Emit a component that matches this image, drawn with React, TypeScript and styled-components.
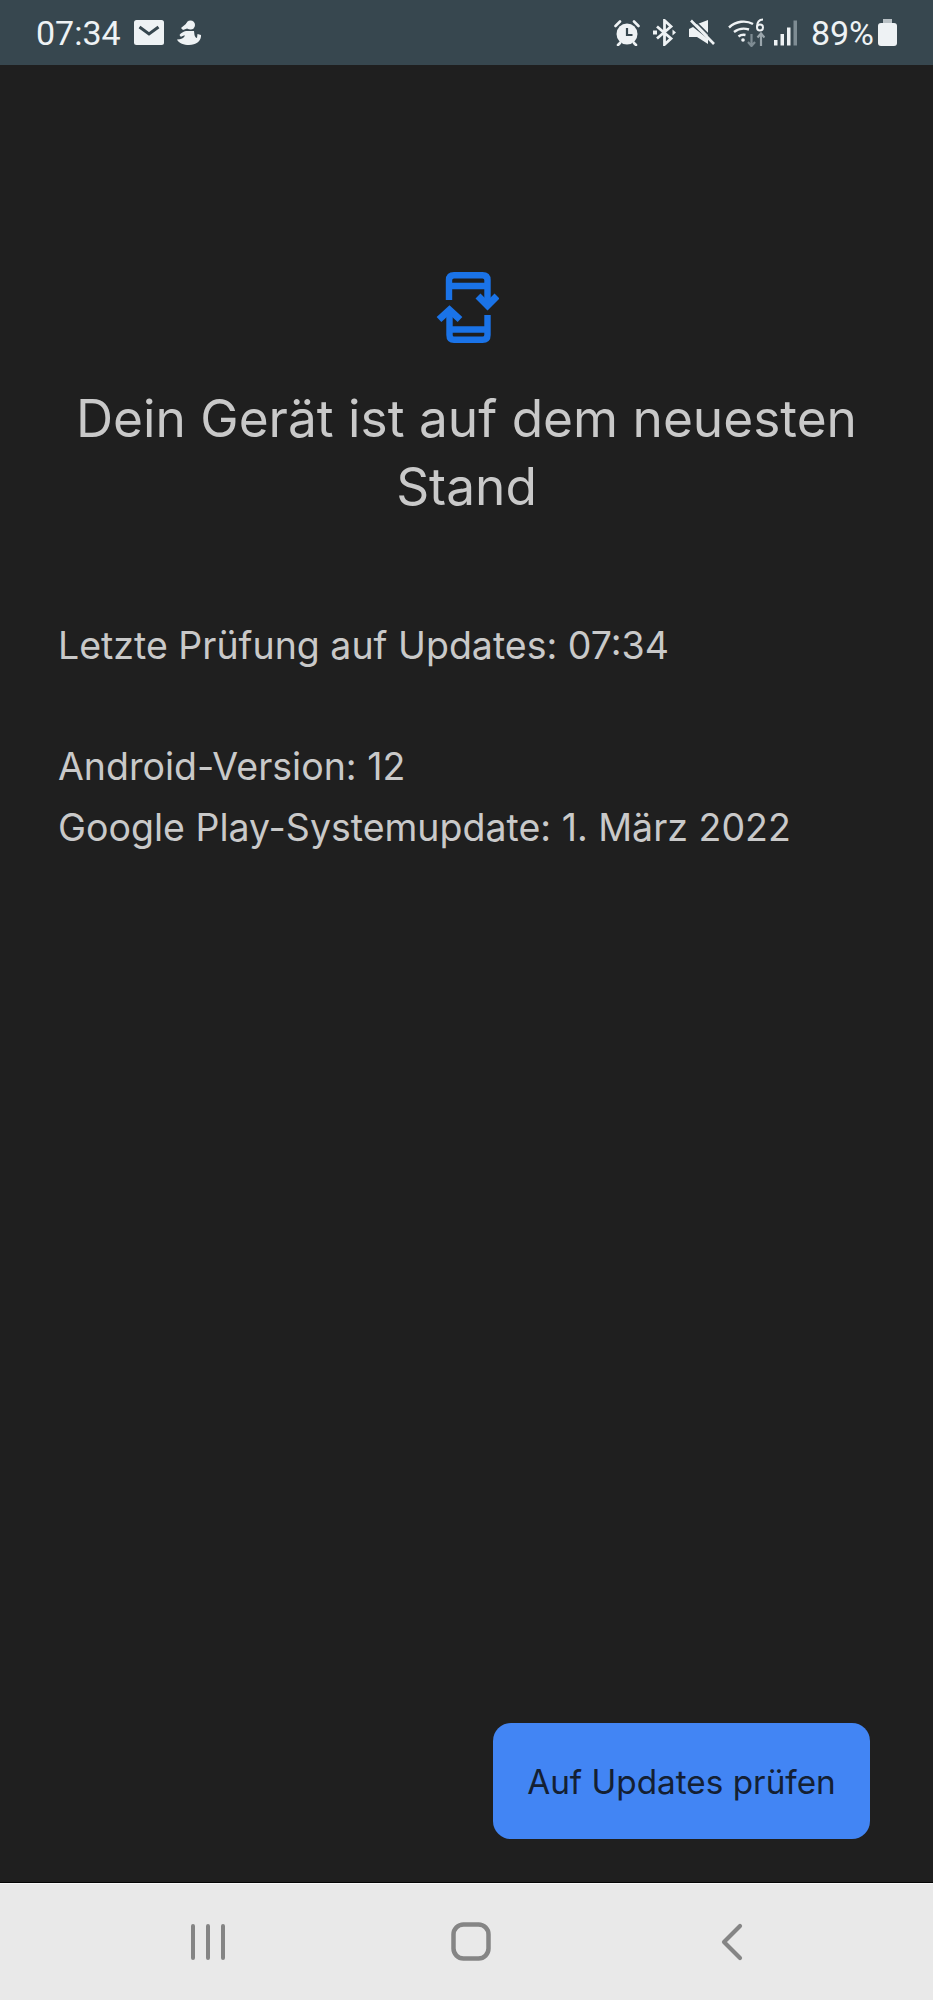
import styled, { createGlobalStyle } from "styled-components";

const GlobalStyle = createGlobalStyle`
  html, body {
    margin: 0;
    padding: 0;
    background: #1f1f1f;
  }
`;

function MailIcon() {
  return (
    <svg width="30" height="25" viewBox="0 0 30 25">
      <rect width="30" height="25" rx="2.5" fill="#eef2f4" />
      <path d="M5.500 7 L15 14 L24.500 7" fill="none" stroke="#37474f" strokeWidth="3" />
    </svg>
  );
}

function SamsungPersonIcon() {
  return (
    <svg width="24" height="25" viewBox="0 0 24 25" fill="#eef2f4">
      <circle cx="13.500" cy="5" r="4.500" />
      <path d="M10 3 L4 8 L6 10 L11.500 8 Z" />
      <path d="M9 11 H17 L17.500 15 C18 17 19 18 20 18 L20.500 14 L24 15 C24.500 20 20 25 12 25 C7 25 2 23.500 0 19.500 C4 19.500 7 18 8 15.500 C6.500 15.500 5 16 4 17 L2.500 15 C4 13 6.500 11.500 9 11 Z" />
    </svg>
  );
}

function AlarmIcon() {
  return (
    <svg width="26" height="26" viewBox="0 0 26 26">
      <circle cx="13" cy="14" r="10.500" fill="#eef2f4" />
      <path d="M13 8 V15 H18.500" fill="none" stroke="#37474f" strokeWidth="2.200" />
      <path d="M1.500 6 L6 1.500 M24.500 6 L20 1.500 M6 23 L4 25 M20 23 L22 25" stroke="#eef2f4" strokeWidth="2.600" strokeLinecap="round" />
    </svg>
  );
}

function BluetoothIcon() {
  return (
    <svg width="23" height="27" viewBox="0 0 23 27">
      <path d="M4 7.500 L18 19.500 L11.500 25.500 V1.500 L18 7.500 L4 19.500" fill="none" stroke="#eef2f4" strokeWidth="2.800" />
      <rect x="0" y="11.500" width="4" height="4" fill="#eef2f4" />
      <path d="M19.500 10.500 L23 13.500 L19.500 16.500 Z" fill="#eef2f4" />
    </svg>
  );
}

function MuteIcon() {
  return (
    <svg width="26" height="27" viewBox="0 0 26 27">
      <path d="M19 1 V17 L6 6 Z" fill="#eef2f4" />
      <path d="M0 10 L4 8 L19 20 V25 L8 18 H0 Z" fill="#eef2f4" />
      <path d="M2 1.500 L25 25" stroke="#eef2f4" strokeWidth="2.600" />
      <path d="M4.500 0.500 L26 22" stroke="#37474f" strokeWidth="1.600" />
    </svg>
  );
}

function WifiIcon() {
  return (
    <svg width="37" height="29" viewBox="0 0 37 29">
      <path d="M1 9.500 C8 3 18 2 25 6" fill="none" stroke="#eef2f4" strokeWidth="2.400" />
      <path d="M6 14 C10.500 10.500 16 10 21 11.500" fill="none" stroke="#eef2f4" strokeWidth="2.400" />
      <path d="M10.500 18.500 C12.500 17 15 16.500 17.500 17" fill="none" stroke="#eef2f4" strokeWidth="2.400" />
      <circle cx="15" cy="22" r="1.800" fill="#eef2f4" />
      <circle cx="32" cy="9.500" r="3" fill="none" stroke="#eef2f4" strokeWidth="2" />
      <path d="M35 1.500 C31.500 1.500 29 4 29 9" fill="none" stroke="#eef2f4" strokeWidth="2" />
      <path d="M23.500 16 V27.500 M20 24 L23.500 28 L27 24" fill="none" stroke="#7e8c93" strokeWidth="2.200" />
      <path d="M33 28 V16 M29.500 19.500 L33 15.500 L36.500 19.500" fill="none" stroke="#9aa6ac" strokeWidth="2.200" />
    </svg>
  );
}

function SignalIcon() {
  return (
    <svg width="23" height="26" viewBox="0 0 23 26">
      <rect x="0" y="20" width="3.500" height="5.500" fill="#eef2f4" />
      <rect x="6.500" y="14" width="3.500" height="11.500" fill="#eef2f4" />
      <rect x="13" y="7.500" width="3.500" height="18" fill="#eef2f4" />
      <rect x="19.500" y="0.500" width="3.500" height="25" fill="#7e8c93" />
    </svg>
  );
}

function UpdateIcon() {
  return (
    <svg width="64" height="71" viewBox="-2 0 64 71" fill="none" stroke="#1a73e8" strokeWidth="6.400">
      <path d="M12 28 V8 Q12 3.200 17 3.200 H45.500 Q50.500 3.200 50.500 8 V33" />
      <path d="M12 14 H50" />
      <path d="M50.500 43 V63 Q50.500 67.800 45.500 67.800 H17 Q12.500 67.800 12.500 63 V38" />
      <path d="M12.500 57.500 H50" />
      <path d="M41 24 L50.500 33.500 L60 24" strokeWidth="7" />
      <path d="M2 47.500 L12.500 38 L23 47.500" strokeWidth="7" />
    </svg>
  );
}

function App() {
  return (
    <Screen>
      <GlobalStyle />
      <StatusBar>
        <StatusGroup>
          <Clock>07:34</Clock>
          <MailIcon />
          <SamsungPersonIcon />
        </StatusGroup>
        <StatusGroup>
          <AlarmIcon />
          <BluetoothIcon />
          <MuteIcon />
          <WifiIcon />
          <SignalSlot>
            <SignalIcon />
          </SignalSlot>
          <Battery>89%</Battery>
          <BatteryIcon />
        </StatusGroup>
      </StatusBar>
      <Content>
        <IconSlot>
          <UpdateIcon />
        </IconSlot>
        <Title>Dein Gerät ist auf dem neuesten Stand</Title>
        <LastCheck>Letzte Prüfung auf Updates: 07:34</LastCheck>
        <InfoGroup>
          <InfoLine>Android-Version: 12</InfoLine>
          <InfoLine>Google Play-Systemupdate: 1. März 2022</InfoLine>
        </InfoGroup>
        <Actions>
          <UpdateButton>Auf Updates prüfen</UpdateButton>
        </Actions>
      </Content>
      <NavBar>
        <NavButton>
          <svg width="34" height="36" viewBox="0 0 34 36" stroke="#858585" strokeWidth="4" strokeLinecap="round">
            <path d="M2 2 V34 M17 2 V34 M32 2 V34" />
          </svg>
        </NavButton>
        <NavButton>
          <svg width="40" height="39" viewBox="0 0 40 39" fill="none" stroke="#858585" strokeWidth="4.500">
            <rect x="2.500" y="2.500" width="35" height="34" rx="10" />
          </svg>
        </NavButton>
        <NavButton>
          <svg width="26" height="38" viewBox="0 0 26 38" fill="none" stroke="#858585" strokeWidth="4.200" strokeLinecap="round" strokeLinejoin="round">
            <path d="M23 3 L7 19 L23 35" />
          </svg>
        </NavButton>
      </NavBar>
    </Screen>
  );
}

const Screen = styled.div`
  display: flex;
  flex-direction: column;
  width: 933px;
  height: 2000px;
  overflow: hidden;
  background: #1f1f1f;
  font-family: "Inter", "Roboto", sans-serif;
`;

const StatusBar = styled.div`
  display: flex;
  flex: none;
  align-items: center;
  justify-content: space-between;
  box-sizing: border-box;
  height: 65px;
  padding: 0 36px 0 36px;
  background: #37474f;
`;

const StatusGroup = styled.div`
  display: flex;
  align-items: center;
  gap: 13px;
`;

const Clock = styled.span`
  font-family: "Roboto", sans-serif;
  font-size: 34px;
  color: #eef2f4;
`;

const SignalSlot = styled.div`
  display: flex;
  margin-left: -4px;
`;

const Battery = styled.span`
  margin-left: 1px;
  font-family: "Roboto", sans-serif;
  font-size: 34px;
  color: #eef2f4;
`;

const BatteryIcon = styled.div`
  position: relative;
  width: 19px;
  height: 23px;
  margin-left: -9px;
  margin-top: 4px;
  border-radius: 3px;
  background: #eef2f4;

  &::before {
    content: "";
    position: absolute;
    top: -4px;
    left: 5px;
    width: 9px;
    height: 4px;
    background: #b9c1c5;
  }
`;

const Content = styled.main`
  display: flex;
  flex: 1;
  flex-direction: column;
  box-sizing: border-box;
  padding: 207px 59px 43px;
`;

const IconSlot = styled.div`
  display: flex;
  justify-content: center;
`;

const Title = styled.h1`
  margin: 41px 0 0;
  font-size: 51.400px;
  font-weight: 400;
  line-height: 68px;
  text-align: center;
  color: #c9c9c9;
`;

const InfoLine = styled.div`
  margin-left: -1px;
  font-size: 37.500px;
  line-height: 61px;
  color: #c9c9c9;
`;

const LastCheck = styled(InfoLine)`
  margin-top: 95px;
`;

const InfoGroup = styled.div`
  margin-top: 60px;
`;

const Actions = styled.div`
  display: flex;
  justify-content: flex-end;
  margin-top: auto;
  padding-right: 4px;
`;

const UpdateButton = styled.button`
  box-sizing: border-box;
  width: 377px;
  height: 116px;
  padding-top: 3px;
  border: none;
  border-radius: 18px;
  background: #4285f4;
  font-family: inherit;
  font-size: 33.300px;
  font-weight: 400;
  color: #142033;
`;

const NavBar = styled.nav`
  display: flex;
  flex: none;
  align-items: center;
  justify-content: space-between;
  box-sizing: border-box;
  height: 118px;
  padding: 0 190px 0 191px;
  border-top: 1px solid #050505;
  box-shadow: inset 0 1px 0 #f7f7f7;
  background: #e9e9e9;
`;

const NavButton = styled.div`
  display: flex;
  align-items: center;
  justify-content: center;
`;

export default App;
